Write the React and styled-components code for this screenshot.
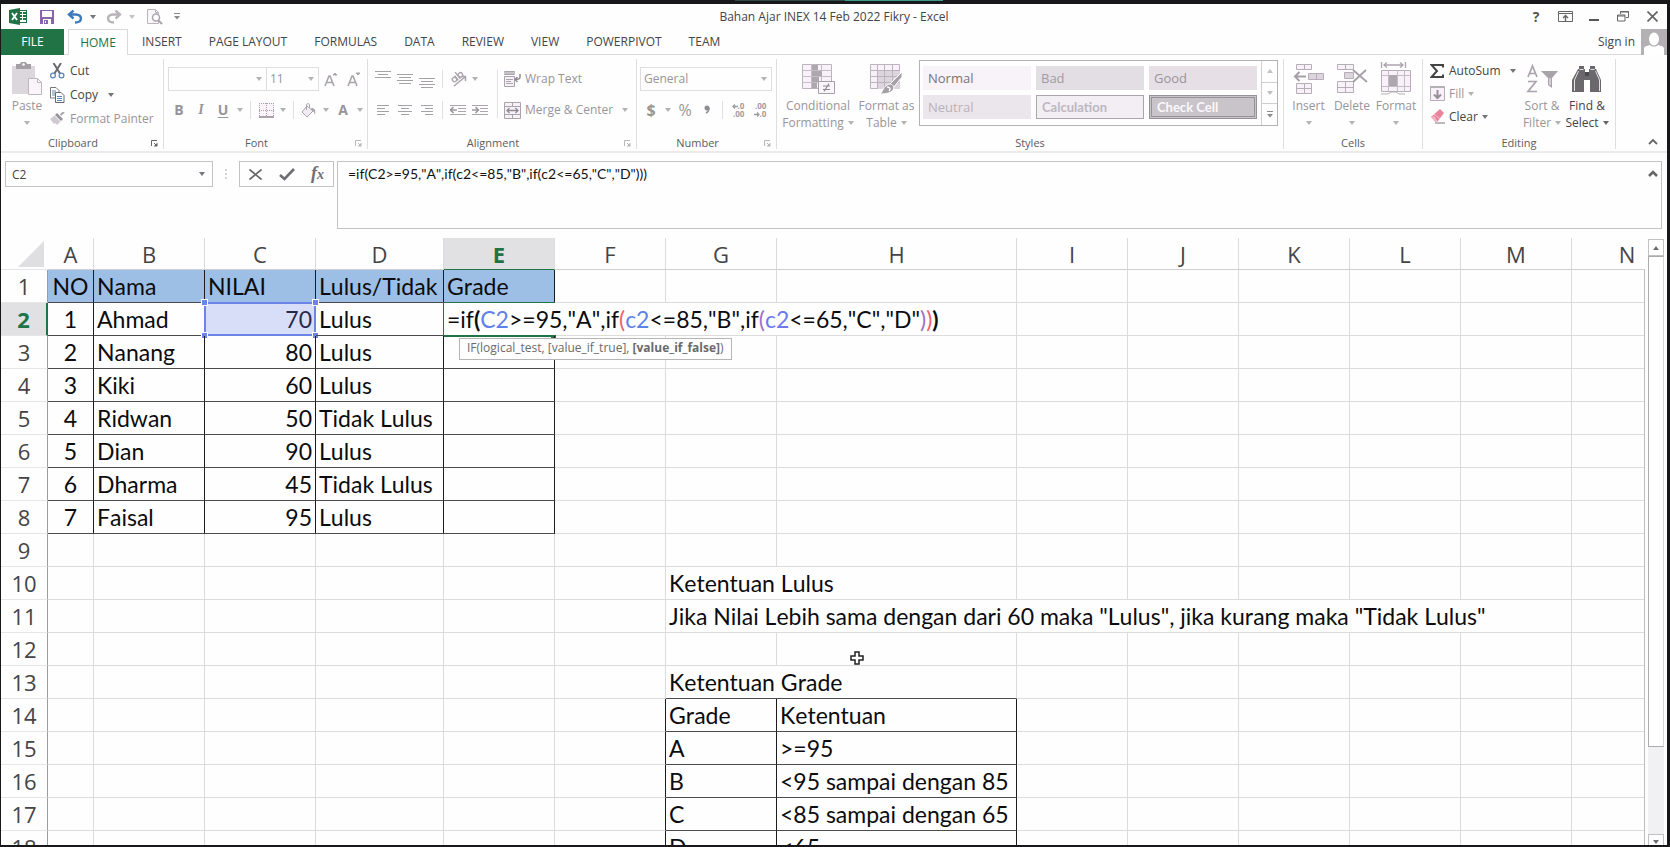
import React from "react";
import styled, { createGlobalStyle, css } from "styled-components";

const GlobalStyle = createGlobalStyle`
  *, *::before, *::after { box-sizing: border-box; }
  body { margin: 0; background: #18181a; font-kerning: none; }
  button, input, select, textarea { font: inherit; color: inherit; font-kerning: none; }
  button { padding: 0; border: 0; background: none; }
`;

const UI = `"Open Sans", "Noto Sans", sans-serif`;
const SHEET = `Lato, "Open Sans", sans-serif`;
const C = {
  text: "#444446",
  dim: "#98959a",
  line: "#d9d9db",
  green: "#217346",
};

/* ---------- window ---------- */

const Screen = styled.div`
  height: 100vh;
  padding: 4px 3px 2px 1px;
  background: #18181a;
  position: relative;
`;

const ShareStripe = styled.div`
  position: absolute;
  top: 0;
  left: 44%;
  width: 208px;
  height: 1px;
  background: linear-gradient(90deg, #2f4a47 53%, #3a9c8a 53%);
`;

const Window = styled.div`
  height: 100%;
  display: flex;
  flex-direction: column;
  overflow: hidden;
  background: #fefefe;
  color: ${C.text};
  font: 12px/16px ${UI};
  font-kerning: none;
`;

const TitleBar = styled.header`
  flex: none;
  display: grid;
  grid-template-columns: 1fr auto 1fr;
  align-items: center;
  height: 25px;
`;

const QuickAccess = styled.div`
  display: flex;
  align-items: center;
  padding-left: 8px;
  gap: 10px;
`;

const QuickButton = styled.button`
  display: flex;
  align-items: center;
  justify-content: center;
  gap: 7px;
  height: 20px;
  min-width: ${(p) => p.$w || 18}px;
`;

const Title = styled.h1`
  margin: 0;
  font-size: 12px;
  font-weight: 400;
`;

const WindowButtons = styled.div`
  display: flex;
  justify-content: flex-end;
  padding-right: 5px;
  gap: 9px;
`;

const WindowButton = styled.button`
  display: flex;
  align-items: center;
  justify-content: center;
  width: 20px;
  height: 20px;
  font-size: 14px;
  font-weight: 700;
  color: #555;
`;

/* ---------- tabs ---------- */

const TabBar = styled.nav`
  flex: none;
  display: flex;
  height: 26px;
  border-bottom: 1px solid ${C.line};
`;

const Tab = styled.button`
  height: 26px;
  padding: 0 13px;
  margin-right: 1px;
  ${(p) =>
    p.$kind === "file" &&
    css`
      width: 63px;
      margin-right: 4px;
      background: ${C.green};
      color: #fff;
    `}
  ${(p) =>
    p.$kind === "active" &&
    css`
      width: 60px;
      padding: 0;
      border: 1px solid ${C.line};
      border-bottom: 0;
      background: #fefefe;
      color: ${C.green};
    `}
`;

const Account = styled.div`
  margin-left: auto;
  display: flex;
  align-items: center;
  gap: 6px;
`;

/* ---------- ribbon ---------- */

const Ribbon = styled.section`
  flex: none;
  display: flex;
  height: 98px;
  padding-top: 4px;
  border-bottom: 2px solid #ebebed;
`;

const GroupBox = styled.section`
  flex: none;
  display: flex;
  flex-direction: column;
  width: ${(p) => p.$w}px;
  height: 90px;
  border-right: 1px solid #dedee0;
`;

const GroupBody = styled.div`
  flex: 1;
  display: flex;
  padding: 0 0 0 ${(p) => p.$left || 4}px;
`;

const GroupFoot = styled.footer`
  display: grid;
  grid-template-columns: ${(p) => (p.$launcher ? "1fr 18px" : "1fr")};
  align-items: center;
  justify-items: center;
  height: 13px;
`;

const Label = styled.h2`
  margin: 0;
  font-size: 11px;
  line-height: 14px;
  font-weight: 400;
  color: #5c5c5e;
`;

const Launcher = styled.button`
  display: flex;
  color: ${(p) => (p.$dim ? "#b9b6ba" : "#666")};
`;

const BigButton = styled.button`
  flex: none;
  display: flex;
  flex-direction: column;
  align-items: center;
  width: ${(p) => p.$w}px;
  height: 74px;
  padding-top: 2px;
  line-height: 17px;
  white-space: nowrap;
  color: ${(p) => (p.$on ? C.text : C.dim)};
`;

const BigIcon = styled.span`
  display: flex;
  align-items: center;
  height: 36px;
`;

const BigLine = styled.span`
  display: flex;
  align-items: center;
  gap: 4px;
  height: 17px;
`;

const Stack = styled.div`
  display: flex;
  flex-direction: column;
  width: ${(p) => (p.$w ? `${p.$w}px` : "auto")};
`;

const RowButton = styled.button`
  display: flex;
  align-items: center;
  gap: ${(p) => p.$gap || 4}px;
  height: ${(p) => p.$h || 24}px;
  white-space: nowrap;
  color: ${(p) => (p.$on ? C.text : C.dim)};
`;

const CaretSlot = styled.span`
  display: flex;
  margin-left: ${(p) => p.$gap || 0}px;
`;

const Rows = styled.div`
  display: flex;
  flex-direction: column;
  gap: 7px;
  padding-top: 8px;
`;

const Row = styled.div`
  display: flex;
  align-items: center;
  height: 24px;
`;

const Tool = styled.button`
  display: flex;
  align-items: center;
  justify-content: center;
  gap: 5px;
  width: ${(p) => p.$w || 22}px;
  height: 22px;
  color: ${C.dim};
  font-size: ${(p) => (p.$large ? 16 : 14)}px;
  font-weight: ${(p) => (p.$bold ? 700 : 400)};
  font-style: ${(p) => (p.$italic ? "italic" : "normal")};
  font-family: ${(p) => (p.$italic ? `"Liberation Serif", serif` : "inherit")};
  text-decoration: ${(p) => (p.$underline ? "underline" : "none")};
  text-underline-offset: 2px;
`;

const Rule = styled.span`
  width: 1px;
  height: 18px;
  margin: 0 4px;
  background: #e2e0e3;
`;

const TallRule = styled.span`
  width: 1px;
  height: 48px;
  margin: 11px 6px 0;
  background: #e2e0e3;
`;

const SelectBox = styled.label`
  position: relative;
  display: flex;
  align-items: center;
  width: ${(p) => p.$w}px;
  height: 24px;
  border: 1px solid #e0dde1;
  margin-right: ${(p) => (p.$joined ? -1 : 0)}px;
  select {
    appearance: none;
    width: 100%;
    height: 22px;
    padding: 0 3px;
    border: 0;
    background: none;
    color: ${C.dim};
  }
  svg {
    position: absolute;
    right: 4px;
  }
`;

const Gallery = styled.div`
  display: flex;
  width: 359px;
  height: 66px;
  margin: 1px 0 0 2px;
  border: 1px solid #b4b2b5;
`;

const Swatches = styled.div`
  flex: 1;
  display: grid;
  grid-template-columns: repeat(3, 108px);
  grid-auto-rows: 24px;
  gap: 5px;
  padding: 5px 0 0 3px;
`;

const Swatch = styled.button`
  padding: 0 5px;
  text-align: left;
  font-size: 13px;
  background: ${(p) => p.$bg};
  color: ${(p) => p.$fg};
  font-weight: ${(p) => (p.$bold ? 700 : 400)};
  font-family: ${(p) => (p.$bold ? SHEET : "inherit")};
  border: ${(p) => p.$border || "0"};
`;

const GallerySteps = styled.div`
  display: flex;
  flex-direction: column;
  width: 16px;
  border-left: 1px solid #d0cdd1;
  button {
    flex: 1;
    display: flex;
    align-items: center;
    justify-content: center;
    color: #aaa7ab;
  }
  button + button {
    border-top: 1px solid #d0cdd1;
  }
`;

const RibbonEnd = styled.div`
  flex: 1;
  display: flex;
  align-items: flex-end;
  justify-content: flex-end;
  padding: 0 9px 2px 0;
`;

/* ---------- formula bar ---------- */

const FormulaBar = styled.section`
  flex: none;
  display: flex;
  align-items: flex-start;
  height: 85px;
  padding: 8px 5px 0 4px;
`;

const NameBox = styled.label`
  display: flex;
  align-items: center;
  width: 208px;
  height: 26px;
  padding-right: 7px;
  border: 1px solid #c3c3c5;
  input {
    flex: 1;
    min-width: 0;
    height: 24px;
    padding: 0 6px;
    border: 0;
    outline: 0;
    background: none;
  }
`;

const Grip = styled.span`
  display: flex;
  align-items: center;
  justify-content: center;
  width: 26px;
  height: 26px;
`;

const EditButtons = styled.div`
  display: flex;
  align-items: center;
  justify-content: space-around;
  width: 95px;
  height: 26px;
  margin-right: 3px;
  border: 1px solid #c3c3c5;
  button {
    display: flex;
    align-items: center;
    justify-content: center;
    width: 26px;
  }
`;

const FormulaInput = styled.div`
  flex: 1;
  display: flex;
  height: 68px;
  border: 1px solid #c3c3c5;
  textarea {
    flex: 1;
    padding: 3px 0 0 10px;
    border: 0;
    outline: 0;
    resize: none;
    background: none;
    color: #111;
    font: 14px/18px ${SHEET};
    font-kerning: none;
  }
  button {
    height: 22px;
    padding-right: 3px;
  }
`;

/* ---------- worksheet ---------- */

const Sheet = styled.main`
  flex: 1;
  min-height: 0;
  display: flex;
`;

const GridClip = styled.div`
  flex: 1;
  min-width: 0;
  overflow: hidden;
  position: relative;
`;

const EdgeLine = styled.div`
  position: absolute;
  top: 32px;
  right: 0;
  bottom: 0;
  width: 1px;
  background: #bdbdbf;
`;

const Grid = styled.table`
  table-layout: fixed;
  width: 1682px;
  border-collapse: separate;
  border-spacing: 0;
  font: 23px/32px ${SHEET};
  font-kerning: none;
  color: #0c0c0e;
  th,
  td {
    padding: 0;
    white-space: nowrap;
  }
`;

const ColHead = styled.th`
  && {
    height: 32px;
    padding-top: 1px;
  }
  border-right: 1px solid #dcdcde;
  border-bottom: 1px solid ${(p) => (p.$active ? C.green : "#cfcfd1")};
  background: ${(p) => (p.$active ? "#e1e1e3" : "transparent")};
  color: ${(p) => (p.$active ? C.green : C.text)};
  font: ${(p) => (p.$active ? 700 : 400)} 22px/30px ${UI};
`;

const RowHead = styled.th`
  height: 33px;
  border-right: ${(p) => (p.$active ? `2px solid ${C.green}` : "1px solid #9c9c9e")};
  border-bottom: 1px solid #e6e6e8;
  background: ${(p) => (p.$active ? "#e1e1e3" : "transparent")};
  color: ${(p) => (p.$active ? C.green : C.text)};
  font: ${(p) => (p.$active ? 700 : 400)} 22px/32px ${UI};
`;

const Corner = styled.th`
  border-bottom: 1px solid #e6e6e8;
  svg {
    display: block;
    margin-left: 17px;
  }
`;

const Cell = styled.td`
  && {
    position: relative;
    height: 33px;
    padding: 0 3px;
    text-align: ${(p) => p.$align || "left"};
    background: ${(p) => (p.$head ? "#9dbfe6" : "transparent")};
    border-right: 1px solid ${(p) => (p.$boxR ? "#1c1c1e" : "#dcdcde")};
    border-bottom: 1px solid ${(p) => (p.$boxB ? "#4c4c4e" : "#dcdcde")};
  }
`;

const RefRange = styled.span`
  position: absolute;
  inset: -1px;
  border: 2px solid #6b84e6;
  background: rgba(107, 132, 230, 0.26);
`;

const Handle = styled.i`
  position: absolute;
  width: 5px;
  height: 5px;
  background: #6b84e6;
  outline: 1px solid #fff;
  ${(p) => (p.$bottom ? "bottom" : "top")}: -4px;
  ${(p) => (p.$right ? "right" : "left")}: -4px;
`;

const EditFrame = styled.span`
  position: absolute;
  top: -1px;
  left: -1px;
  width: 112px;
  height: 35px;
  border: 1px solid ${C.green};
  border-width: 1px 0 2px 1px;
  &::after {
    content: "";
    position: absolute;
    right: -1px;
    bottom: -3px;
    width: 5px;
    height: 3px;
    background: ${C.green};
  }
`;

const Part = styled.span`
  color: ${(p) => p.$c || "inherit"};
  font-weight: ${(p) => (p.$bold ? 700 : 400)};
`;

const ArgTip = styled.div`
  position: absolute;
  z-index: 2;
  top: 35px;
  left: 15px;
  height: 22px;
  padding: 0 7px;
  border: 1px solid #b5b5b7;
  background: #fefefe;
  color: #6a6a6c;
  font: 12px/18px ${UI};
  font-kerning: none;
`;

const CrossCursor = styled.svg`
  position: absolute;
  left: 73px;
  top: 18px;
`;

const ScrollBar = styled.div`
  flex: none;
  display: flex;
  flex-direction: column;
  width: 16px;
  margin: 1px 3px 0;
  background: #f1f1f3;
`;

const ScrollButton = styled.button`
  flex: none;
  display: flex;
  align-items: center;
  justify-content: center;
  height: ${(p) => (p.$cut ? 11 : 17)}px;
  border: 1px solid #c2c2c4;
  border-bottom: ${(p) => (p.$cut ? 0 : "1px solid #c2c2c4")};
  background: #fefefe;
  color: #6e6e70;
  overflow: hidden;
  padding-top: ${(p) => (p.$cut ? 4 : 0)}px;
`;

const Thumb = styled.div`
  flex: 491 0 0;
  border: 1px solid #aaaaac;
  border-right-color: #d6d6d8;
  background: #fefefe;
`;

const TrackRest = styled.div`
  flex: 87 0 0;
`;

/* ---------- icons ---------- */

const Caret = ({ c = "#77747a", up }) => (
  <svg width="6" height="4" viewBox="0 0 6 4" aria-hidden="true">
    <path d={up ? "M0 4h6L3 0z" : "M0 0h6L3 4z"} fill={c} />
  </svg>
);

const Ico = ({ w = 16, h = 16, children, ...rest }) => (
  <svg width={w} height={h} viewBox={`0 0 ${w} ${h}`} fill="none" aria-hidden="true" {...rest}>
    {children}
  </svg>
);

const G = "#aaa5ac";

const ExcelIcon = () => (
  <Ico w={18} h={17}>
    <rect x="8.500" y="2.500" width="9" height="12" fill="#fff" stroke={C.green} />
    <path d="M10 5h3M14 5h3M10 8h3M14 8h3M10 11h3M14 11h3" stroke={C.green} strokeWidth="2" />
    <path d="M0 2l11-2v17L0 15z" fill={C.green} />
    <path d="M3 5l5 7M8 5l-5 7" stroke="#fff" strokeWidth="1.800" />
  </Ico>
);
const SaveIcon = () => (
  <Ico w={14} h={14}>
    <path d="M0 0h14v14H0z" fill="#8a63ad" />
    <path d="M2 1h10v6H2z" fill="#fdfbff" />
    <path d="M3 9h8v5H3z" fill="#fff" />
    <path d="M4 10h4v4H4z" fill="#8a63ad" />
    <path d="M5 11h1v2H5z" fill="#fff" />
  </Ico>
);
const UndoIcon = ({ c = "#3b78bd", flip }) => (
  <Ico w={16} h={14}>
    <g transform={flip ? "matrix(-1 0 0 1 16 0)" : undefined} stroke={c} strokeWidth="2.400">
      <path d="M6.500 .5L2 4.500l4.500 4" />
      <path d="M2 4.500h7c6.500 0 7 8-1 8" />
    </g>
  </Ico>
);
const PreviewIcon = () => (
  <Ico w={17} h={17}>
    <path d="M1.500 1.500h8l3 3v11h-11z" stroke="#b9b5bb" fill="#faf7fb" />
    <path d="M9.500 1.500v3h3" stroke="#b9b5bb" />
    <circle cx="10" cy="9.500" r="3.500" fill="#fff" stroke={G} strokeWidth="1.500" />
    <path d="M12.500 12.500L16 16" stroke={G} strokeWidth="2" />
  </Ico>
);
const CustomizeIcon = () => (
  <Ico w={6} h={7}>
    <path d="M0 .5h6" stroke="#8c898e" />
    <path d="M0 3h6L3 6.500z" fill="#8c898e" />
  </Ico>
);
const RibbonOptIcon = () => (
  <Ico w={15} h={12}>
    <path d="M.5.5h14v10H.5zM.5 2.500h14" stroke="#666" />
    <path d="M7.500 10V5M5 7l2.500-2.500L10 7" stroke="#666" strokeWidth="1.400" />
  </Ico>
);
const MinIcon = () => (
  <Ico w={10} h={12}><path d="M0 9h10" stroke="#555" strokeWidth="2" /></Ico>
);
const RestoreIcon = () => (
  <Ico w={12} h={11}>
    <path d="M3.500 3V.5h8v6H9" stroke="#666" />
    <path d="M3 1h9" stroke="#666" />
    <path d="M.5 4h7.500v6H.5zM.5 5H8" stroke="#666" />
  </Ico>
);
const CloseIcon = ({ w = 11 }) => (
  <Ico w={w} h={11}><path d={`M.5.5l${w - 1} 10M${w - 0.5}.5l-${w - 1} 10`} stroke="#666" strokeWidth="1.700" /></Ico>
);
const Avatar = () => (
  <Ico w={26} h={26}>
    <path d="M0 0h26v26H0z" fill="#b3b1b4" />
    <ellipse cx="13" cy="10" rx="5" ry="6.500" fill="#fff" />
    <path d="M3 26v-6c0-3 3-3 6-4 2 2 6 2 8 0 3 1 6 1 6 4v6z" fill="#fff" />
  </Ico>
);
const LauncherIcon = () => (
  <Ico w={7} h={7}>
    <path d="M.5 6V.5H6M3 3l3 3" stroke="currentColor" />
    <path d="M6.500 2.500v4h-4z" fill="currentColor" />
  </Ico>
);
const PasteIcon = () => (
  <Ico w={32} h={34}>
    <path d="M1 4h23v28H1z" fill="#dcd6dd" />
    <path d="M5 2h4c0-3 7-3 7 0h4v5H5z" fill="#a39fa5" />
    <circle cx="12.500" cy="2.500" r="1.300" fill="#fff" />
    <path d="M17.500 16.500h9l4 4v12h-13z" fill="#fbf5fb" stroke="#bcb6bd" />
    <path d="M26.500 16.500v4h4" stroke="#bcb6bd" />
  </Ico>
);
const CutIcon = () => (
  <Ico w={15} h={16}>
    <path d="M3.500 0L10 10.500M11 0L4.500 10.500" stroke="#6a6a6e" strokeWidth="2" />
    <circle cx="3" cy="12.500" r="2.400" stroke="#5a85b8" strokeWidth="1.200" />
    <circle cx="11.500" cy="12.500" r="2.400" stroke="#5a85b8" strokeWidth="1.200" />
  </Ico>
);
const CopyIcon = () => (
  <Ico w={15} h={16}>
    <path d="M.5.5H6l3 3V11H.500z" fill="#fff" stroke="#77777b" />
    <path d="M2 4h4M2 6h3M2 8h3" stroke="#5a85b8" />
    <path d="M5.500 5.500H11l3 3v7H5.500z" fill="#fff" stroke="#66666a" />
    <path d="M7 9.500h5M7 11.500h5M7 13.500h5" stroke="#5a85b8" />
  </Ico>
);
const PainterIcon = () => (
  <Ico w={15} h={14}>
    <path d="M14 0l-3.500 3" stroke={G} strokeWidth="2" />
    <path d="M7 1l6 6-2 2-6-6z" fill="#989399" />
    <path d="M4.500 3.500l6 6L7 13 5 11l-1 1L0 7z" fill="#cfc9d0" />
  </Ico>
);
const GrowA = ({ down }) => (
  <Ico w={14} h={15}>
    <path d="M1 14L5 4h1l4 10M2.500 10.500h6" stroke={G} strokeWidth="1.600" />
    <path d={down ? "M9 1h4l-2 2z" : "M9 3h4l-2-2z"} fill={G} stroke={G} />
  </Ico>
);
const BordersIcon = () => (
  <Ico w={15} h={15}>
    <path d="M0 0h15v15H0z" fill="#faf3fa" />
    <path d="M0 .5h15M0 7.500h15M.5 0v14M7.500 0v14M14.500 0v14" stroke="#a9a2aa" strokeDasharray="1 1" />
    <path d="M0 14h15" stroke="#a9a2aa" strokeWidth="2" />
  </Ico>
);
const FillColorIcon = () => (
  <Ico w={16} h={15}>
    <path d="M6 3l6 5-6 6-5-5z" fill="#f2ebf3" stroke={G} />
    <path d="M5.500 7V1.500c0-1 3-1 3 0V5" stroke={G} />
    <path d="M10 5c4 0 5 2 4 7-1-3-1-4-3-4z" fill={G} />
  </Ico>
);

const Lines = ({ rows, w = 16, h = 18 }) => (
  <Ico w={w} h={h}>
    {rows.map(([x, y, l]) => (
      <path key={y} d={`M${x} ${y}.5h${l}`} stroke="#a5a2a7" />
    ))}
  </Ico>
);
const OrientIcon = () => (
  <Ico w={17} h={16}>
    <path d="M4 15L15 6M11 5.500h4.500V10" stroke={G} strokeWidth="1.500" />
    <g transform="rotate(-38 7 6)" stroke={G} strokeWidth="1.400">
      <circle cx="3.500" cy="6.500" r="2.200" />
      <path d="M6 3.500v6M8.500 1v8.500" />
      <circle cx="11" cy="6.500" r="2.200" />
    </g>
  </Ico>
);
const IndentIcon = ({ right }) => (
  <Ico w={16} h={11}>
    <path d="M0 .5h16M8 3.500h8M8 6.500h8M0 9.500h16" stroke="#aaa7ac" />
    <path d="M0 1.500h7v7H0z" fill="#fefefe" />
    <path d={right ? "M0 5h6M3.500 2L6.500 5l-3 3" : "M7 5H1M3.500 2L.5 5l3 3"} stroke="#9c989e" strokeWidth="1.600" />
  </Ico>
);
const WrapIcon = () => (
  <Ico w={17} h={16}>
    <path d="M.5.5h10v3H.500zM.5 5.500h10v10H.500z" fill="#f7f0f8" stroke="#aaa3ab" />
    <path d="M0 2h11" stroke="#c9c1ca" strokeWidth="2" />
    <path d="M2 8.500h7M2 10.500h5M2 12.500h7" stroke={G} />
    <path d="M16 3v3c0 2-1 2.500-5 2.500M13.500 6L11 8.500l2.500 2.500" stroke="#8f8a91" strokeWidth="1.500" />
  </Ico>
);
const MergeIcon = () => (
  <Ico w={17} h={17}>
    <path d="M.5.500h16v16H.500zM.5 4.500h16M.5 12.500h16M8.500 0v4M8.500 13v4" fill="#f7f0f8" stroke="#aaa3ab" />
    <path d="M3 8.500h11M5.500 6L3 8.500 5.500 11M11.500 6L14 8.500 11.500 11" stroke="#8f8a91" strokeWidth="1.300" />
  </Ico>
);
const CommaIcon = () => (
  <Ico w={8} h={10}><circle cx="4" cy="3" r="2.500" fill="#8f8c92" /><path d="M6 3c0 3-1 4-3 5" stroke="#8f8c92" strokeWidth="1.500" /></Ico>
);

const Digits = styled.span`
  display: flex;
  flex-direction: column;
  font: 700 8px/8px ${UI};
  color: #a09ca2;
  span {
    display: flex;
    align-items: center;
    justify-content: flex-end;
  }
`;
const Arrow = ({ right }) => (
  <Ico w={6} h={5}>
    <path d={right ? "M0 2.500h5M3 .5l2 2-2 2" : "M6 2.500H1M3 .5l-2 2 2 2"} stroke="#a09ca2" strokeWidth="1.300" />
  </Ico>
);

const CondIcon = () => (
  <Ico w={33} h={31}>
    <path d="M.5.500h29v24H.500z" fill="#f8f1f9" stroke="#bbb4bc" />
    <path d="M.5 6.500h29M.5 12.500h29M.5 18.500h29M9.500 0v24M19.500 0v24" stroke="#c4bdc5" />
    <path d="M10 1h6v5h-6zM10 7h10v5H10zM10 13h7v5h-7zM10 19h5v5h-5z" fill="#aea7af" />
    <path d="M16.500 17.500h16v12h-16z" fill="#fbf6fb" stroke="#a59fa6" />
    <path d="M21 22h7M21 25.500h7M27 19.500l-5 8" stroke="#8f8a91" strokeWidth="1.200" />
  </Ico>
);
const TableIcon = () => (
  <Ico w={33} h={31}>
    <path d="M.5.500h29v24H.500z" fill="#f8f1f9" stroke="#bbb4bc" />
    <path d="M8 7h22v18H8z" fill="#dcd5dd" />
    <path d="M.5 6.500h29M.5 12.500h29M.5 18.500h29M7.500 0v24M14.500 0v24M22.500 0v24" stroke="#bbb4bc" />
    <path d="M32 8v5L23 24l-4-3z" fill="#a59fa6" stroke="#fff" />
    <path d="M19 20c4 0 6 3 4 6-2 3-7 4-13 4 3-2 3-8 9-10z" fill="#a59fa6" stroke="#fff" />
    <path d="M17 23c3 0 4 2 2 4" stroke="#fff" strokeWidth="1.500" />
  </Ico>
);
const InsertIcon = () => (
  <Ico w={32} h={32}>
    <path d="M3.500 1.500h15v5h-15zM11.500 1v5M3.500 20.500h15v10h-15zM3.500 25.500h15M11.500 20v10" fill="#f8f1f9" stroke="#b5aeb6" />
    <path d="M15.500 10.500h15v6h-15zM23.500 10v6" fill="#dcd5dd" stroke="#b5aeb6" />
    <path d="M13 13.500H2M6.500 9L2 13.500 6.500 18" stroke="#a59fa6" strokeWidth="2" />
  </Ico>
);
const DeleteIcon = () => (
  <Ico w={32} h={32}>
    <path d="M1.500 1.500h16v5h-16zM9.500 1v5M1.500 18.500h16v11h-16zM1.500 24.500h16M9.500 18v11" fill="#f8f1f9" stroke="#b5aeb6" />
    <path d="M8.500 9.500h9v6h-9z" fill="#dcd5dd" stroke="#b5aeb6" />
    <path d="M17 7l14 12M30 7L17 19" stroke="#a59fa6" strokeWidth="1.800" />
  </Ico>
);
const FormatIcon = () => (
  <Ico w={32} h={34}>
    <path d="M1.500 0v6M25.500 0v6M4 3h19M7 .5L4 3l3 2.500M20 .5L23 3l-3 2.500" stroke={G} strokeWidth="1.300" />
    <path d="M1.500 8.500h29v21h-29z" fill="#f8f1f9" stroke="#b5aeb6" />
    <path d="M1.500 13.500h29M1.500 24.500h29M8.500 8v21M17.500 8v21M24.500 8v21" stroke="#c4bdc5" />
    <path d="M9 13h8v11H9z" fill="#aea7af" />
    <path d="M1 32h7l3-2h5l3 2h6" stroke="#b5aeb6" />
  </Ico>
);
const SumIcon = () => (
  <Ico w={15} h={14}>
    <path d="M13 3.500V1H1.500L7 7l-5.500 6H13v-2.500" stroke="#444" strokeWidth="2" />
  </Ico>
);
const FillDownIcon = () => (
  <Ico w={15} h={15}>
    <path d="M.5.500h14v14H.500z" fill="#f8f1f9" stroke="#b5aeb6" />
    <path d="M0 1.500h15" stroke="#b5aeb6" />
    <path d="M7.500 4v8M4 8.500L7.500 12 11 8.500" stroke="#958f96" strokeWidth="2" />
  </Ico>
);
const EraserIcon = () => (
  <Ico w={15} h={15}>
    <path d="M10 0l4 4-6 8H5L1 8z" fill="#e8849c" />
    <path d="M4 5l6 5" stroke="#f7c4d0" />
    <path d="M1 8l4 5h3L4 7z" fill="#f6b7c5" />
    <path d="M5 14h10" stroke="#777" />
  </Ico>
);
const SortIcon = () => (
  <Ico w={32} h={32}>
    <path d="M2 14L6.500 3 11 14M3.500 10.500h6" stroke={G} strokeWidth="1.700" />
    <path d="M2 18.500h8L2 28.500h9" stroke={G} strokeWidth="1.700" />
    <path d="M15 8h17l-6 7v10l-4-3v-7z" fill="#a8a2a9" />
    <path d="M24 15v7" stroke="#fff" />
  </Ico>
);
const FindIcon = () => (
  <Ico w={32} h={28}>
    <path d="M8 1h5v3h1v3h4V4h1V1h5v3h1l5 11v12H19V15h-6v12H1V15L7 4h1z" fill="#6a686c" />
    <path d="M14 7h4v4h-4z" fill="#4c4a4e" />
    <path d="M7.500 6L3.500 15v11M24.500 6l4 9v11M8.500 4.500h4M19.500 4.500h4" stroke="#fff" strokeWidth=".8" />
  </Ico>
);
const CheckIcon = () => (
  <Ico w={16} h={13}><path d="M1 7l4.500 4L15 1" stroke="#6e6e72" strokeWidth="2.600" /></Ico>
);
const Chevron = ({ bold }) => (
  <Ico w={10} h={7}><path d="M1 6l4-4 4 4" stroke="#666" strokeWidth={bold ? 2.6 : 1.8} /></Ico>
);

const Fx = styled.span`
  font: italic 700 18px/20px "Liberation Serif", serif;
  color: #6e6e72;
  small {
    font-size: 14px;
  }
`;

/* ---------- pieces ---------- */

const Group = ({ name, w, left, launcher, children }) => (
  <GroupBox $w={w} aria-label={name}>
    <GroupBody $left={left}>{children}</GroupBody>
    <GroupFoot $launcher={Boolean(launcher)}>
      <Label>{name}</Label>
      {launcher && (
        <Launcher $dim={launcher === "dim"} aria-label={`${name} settings`}>
          <LauncherIcon />
        </Launcher>
      )}
    </GroupFoot>
  </GroupBox>
);

const Big = ({ icon, lines, caret, on, w }) => (
  <BigButton $w={w} $on={on}>
    <BigIcon>{icon}</BigIcon>
    <BigLine>{lines[0]}</BigLine>
    <BigLine>
      {lines[1]}
      {caret && <Caret c={on ? "#666" : "#b5b1b6"} />}
    </BigLine>
  </BigButton>
);

const pale = "#b5b1b6";
const CaretTool = ({ label }) => (
  <Tool $w={12} aria-label={label}><Caret c={pale} /></Tool>
);

const swatches = [
  { t: "Normal", bg: "#f8f2f9", fg: "#77747a" },
  { t: "Bad", bg: "#e3dde4", fg: "#a19ca3" },
  { t: "Good", bg: "#e6e0e6", fg: "#98949a" },
  { t: "Neutral", bg: "#ebe5ec", fg: "#b9b3ba" },
  { t: "Calculation", bg: "#f3edf4", fg: "#bdb7be", bold: true, border: "1px solid #aaa6ab" },
  { t: "Check Cell", bg: "#c9c3ca", fg: "#fbf9fb", bold: true, border: "3px double #969297" },
];

const tabs = ["INSERT", "PAGE LAYOUT", "FORMULAS", "DATA", "REVIEW", "VIEW", "POWERPIVOT", "TEAM"];

const columns = [
  ["A", 46], ["B", 111], ["C", 111], ["D", 128], ["E", 111], ["F", 111], ["G", 111],
  ["H", 240], ["I", 111], ["J", 111], ["K", 111], ["L", 111], ["M", 111], ["N", 111],
];

const students = {
  2: ["1", "Ahmad", "70", "Lulus"],
  3: ["2", "Nanang", "80", "Lulus"],
  4: ["3", "Kiki", "60", "Lulus"],
  5: ["4", "Ridwan", "50", "Tidak Lulus"],
  6: ["5", "Dian", "90", "Lulus"],
  7: ["6", "Dharma", "45", "Tidak Lulus"],
  8: ["7", "Faisal", "95", "Lulus"],
};

const rules = {
  14: ["Grade", "Ketentuan"],
  15: ["A", ">=95"],
  16: ["B", "<95 sampai dengan 85"],
  17: ["C", "<85 sampai dengan 65"],
  18: ["D", "<65"],
};

const notes = {
  10: { text: "Ketentuan Lulus", span: 2 },
  11: { text: 'Jika Nilai Lebih sama dengan dari 60 maka "Lulus", jika kurang maka "Tidak Lulus"', span: 7 },
  13: { text: "Ketentuan Grade", span: 2 },
};

const formula = '=if(C2>=95,"A",if(c2<=85,"B",if(c2<=65,"C","D")))';
const BLUE = "#5f82ea";
const VIOLET = "#6f78ee";
const RED = "#f2606a";
const PURPLE = "#a070cc";

const EditedFormula = () => (
  <>
    =if<Part $bold>(</Part><Part $c={BLUE}>C2</Part>&gt;=95,"A",if<Part $c={RED}>(</Part>
    <Part $c={BLUE}>c2</Part>&lt;=85,"B",if<Part $c={PURPLE}>(</Part>
    <Part $c={VIOLET}>c2</Part>&lt;=65,"C","D"<Part $c={PURPLE}>)</Part>
    <Part $c={RED}>)</Part><Part $bold>)</Part>
  </>
);

function cellsFor(row) {
  const out = [];
  const headings = ["NO", "Nama", "NILAI", "Lulus/Tidak", "Grade"];
  for (let i = 0; i < columns.length; i += 1) {
    const key = columns[i][0];
    if (row === 1 && i < 5) {
      out.push(<Cell key={key} $head $boxR $boxB $align={i === 0 ? "center" : "left"}>{headings[i]}</Cell>);
    } else if (row === 2 && i === 4) {
      out.push(
        <Cell key={key} colSpan={4}>
          <EditFrame />
          <EditedFormula />
          <ArgTip role="tooltip">
            IF(logical_test, [value_if_true], <b>[value_if_false]</b>)
          </ArgTip>
        </Cell>
      );
      i += 3;
    } else if (students[row] && i < 5) {
      out.push(
        <Cell key={key} $boxR $boxB $align={i === 0 ? "center" : i === 2 ? "right" : "left"}>
          {students[row][i]}
          {row === 2 && i === 2 && (
            <RefRange>
              <Handle />
              <Handle $right />
              <Handle $bottom />
              <Handle $bottom $right />
            </RefRange>
          )}
        </Cell>
      );
    } else if (notes[row] && i === 6) {
      out.push(<Cell key={key} colSpan={notes[row].span} $boxB={row === 13}>{notes[row].text}</Cell>);
      i += notes[row].span - 1;
    } else if (rules[row] && (i === 6 || i === 7)) {
      out.push(<Cell key={key} $boxR $boxB>{rules[row][i - 6]}</Cell>);
    } else if (row === 12 && i === 7) {
      out.push(
        <Cell key={key}>
          <CrossCursor width="14" height="14" viewBox="0 0 14 14" aria-hidden="true">
            <path d="M5 1h4v4h4v4H9v4H5V9H1V5h4z" fill="#fff" stroke="#222" strokeWidth="1.500" />
          </CrossCursor>
        </Cell>
      );
    } else {
      out.push(<Cell key={key} $boxR={Boolean(rules[row]) && i === 5} />);
    }
  }
  return out;
}

export default function App() {
  return (
    <Screen>
      <GlobalStyle />
      <ShareStripe />
      <Window>
        <TitleBar>
          <QuickAccess>
            <ExcelIcon />
            <QuickButton $w={20} aria-label="Save"><SaveIcon /></QuickButton>
            <QuickButton aria-label="Undo"><UndoIcon /><Caret /></QuickButton>
            <QuickButton aria-label="Redo"><UndoIcon c="#b7b4b9" flip /><Caret c="#c5c2c6" /></QuickButton>
            <QuickButton aria-label="Print preview"><PreviewIcon /></QuickButton>
            <QuickButton $w={8} aria-label="Customize toolbar"><CustomizeIcon /></QuickButton>
          </QuickAccess>
          <Title>Bahan Ajar INEX 14 Feb 2022 Fikry - Excel</Title>
          <WindowButtons>
            <WindowButton aria-label="Help">?</WindowButton>
            <WindowButton aria-label="Ribbon display options"><RibbonOptIcon /></WindowButton>
            <WindowButton aria-label="Minimize"><MinIcon /></WindowButton>
            <WindowButton aria-label="Restore"><RestoreIcon /></WindowButton>
            <WindowButton aria-label="Close"><CloseIcon /></WindowButton>
          </WindowButtons>
        </TitleBar>

        <TabBar>
          <Tab $kind="file">FILE</Tab>
          <Tab $kind="active">HOME</Tab>
          {tabs.map((t) => (
            <Tab key={t}>{t}</Tab>
          ))}
          <Account>
            <button>Sign in</button>
            <Avatar />
          </Account>
        </TabBar>

        <Ribbon>
          <Group name="Clipboard" w={163} left={3} launcher="on">
            <Big w={46} icon={<PasteIcon />} lines={["Paste"]} caret />
            <Stack $w={110}>
              <RowButton $on $gap={5}><CutIcon />Cut</RowButton>
              <RowButton $on $gap={5}><CopyIcon />Copy<CaretSlot $gap={5}><Caret /></CaretSlot></RowButton>
              <RowButton $gap={5}><PainterIcon />Format Painter</RowButton>
            </Stack>
          </Group>

          <Group name="Font" w={204} left={4} launcher="dim">
            <Rows>
              <Row>
                <SelectBox $w={99} $joined>
                  <select aria-label="Font name" defaultValue=""><option value="" /></select>
                  <Caret c={pale} />
                </SelectBox>
                <SelectBox $w={53}>
                  <select aria-label="Font size"><option>11</option></select>
                  <Caret c={pale} />
                </SelectBox>
                <Tool $w={24} aria-label="Increase font size"><GrowA /></Tool>
                <Tool aria-label="Decrease font size"><GrowA down /></Tool>
              </Row>
              <Row>
                <Tool $bold>B</Tool>
                <Tool $bold $italic>I</Tool>
                <Tool $bold $underline>U</Tool>
                <CaretTool label="Underline styles" />
                <Rule />
                <Tool aria-label="Borders"><BordersIcon /></Tool>
                <CaretTool label="Border styles" />
                <Rule />
                <Tool aria-label="Fill color"><FillColorIcon /></Tool>
                <CaretTool label="Fill colors" />
                <Tool $bold aria-label="Font color">A</Tool>
                <CaretTool label="Font colors" />
              </Row>
            </Rows>
          </Group>

          <Group name="Alignment" w={269} launcher="dim">
            <Rows>
              <Row>
                <Tool aria-label="Top align"><Lines rows={[[0, 1, 16], [3, 4, 10], [0, 7, 16]]} /></Tool>
                <Tool aria-label="Middle align"><Lines rows={[[0, 4, 16], [2, 7, 12], [0, 10, 16], [2, 13, 12]]} /></Tool>
                <Tool aria-label="Bottom align"><Lines rows={[[0, 8, 16], [2, 11, 12], [0, 14, 16], [2, 17, 12]]} /></Tool>
                <Rule />
                <Tool $w={34} aria-label="Orientation"><OrientIcon /><Caret c={pale} /></Tool>
              </Row>
              <Row>
                <Tool aria-label="Align left"><Lines h={10} w={12} rows={[[0, 0, 12], [0, 3, 8], [0, 6, 12], [0, 9, 8]]} /></Tool>
                <Tool aria-label="Center"><Lines h={10} w={14} rows={[[0, 0, 14], [3, 3, 8], [0, 6, 14], [3, 9, 8]]} /></Tool>
                <Tool aria-label="Align right"><Lines h={10} w={12} rows={[[0, 0, 12], [4, 3, 8], [0, 6, 12], [4, 9, 8]]} /></Tool>
                <Rule />
                <Tool aria-label="Decrease indent"><IndentIcon /></Tool>
                <Tool aria-label="Increase indent"><IndentIcon right /></Tool>
              </Row>
            </Rows>
            <TallRule />
            <Rows>
              <RowButton><WrapIcon />Wrap Text</RowButton>
              <RowButton><MergeIcon />Merge &amp; Center<CaretSlot $gap={5}><Caret c={pale} /></CaretSlot></RowButton>
            </Rows>
          </Group>

          <Group name="Number" w={140} left={3} launcher="dim">
            <Rows>
              <Row>
                <SelectBox $w={132}>
                  <select aria-label="Number format"><option>General</option></select>
                  <Caret c={pale} />
                </SelectBox>
              </Row>
              <Row>
                <Tool $bold $large>$</Tool>
                <CaretTool label="Currency formats" />
                <Tool $large>%</Tool>
                <Tool aria-label="Comma style"><CommaIcon /></Tool>
                <Rule />
                <Tool aria-label="Increase decimal">
                  <Digits><span><Arrow />.0</span><span>.00</span></Digits>
                </Tool>
                <Tool aria-label="Decrease decimal">
                  <Digits><span>.00</span><span><Arrow right />.0</span></Digits>
                </Tool>
              </Row>
            </Rows>
          </Group>

          <Group name="Styles" w={507} left={3}>
            <Big w={76} icon={<CondIcon />} lines={["Conditional", "Formatting"]} caret />
            <Big w={61} icon={<TableIcon />} lines={["Format as", "Table"]} caret />
            <Gallery>
              <Swatches>
                {swatches.map((s) => (
                  <Swatch key={s.t} $bg={s.bg} $fg={s.fg} $bold={s.bold} $border={s.border}>
                    {s.t}
                  </Swatch>
                ))}
              </Swatches>
              <GallerySteps>
                <button aria-label="Previous styles"><Caret c="#c2bec3" up /></button>
                <button aria-label="Next styles"><Caret c="#c2bec3" /></button>
                <button aria-label="More styles"><CustomizeIcon /></button>
              </GallerySteps>
            </Gallery>
          </Group>

          <Group name="Cells" w={139} left={3}>
            <Big w={43} icon={<InsertIcon />} lines={["Insert"]} caret />
            <Big w={44} icon={<DeleteIcon />} lines={["Delete"]} caret />
            <Big w={44} icon={<FormatIcon />} lines={["Format"]} caret />
          </Group>

          <Group name="Editing" w={193} left={7}>
            <Stack $w={90}>
              <RowButton $on $h={23}><SumIcon />AutoSum<CaretSlot $gap={5}><Caret /></CaretSlot></RowButton>
              <RowButton $h={23}><FillDownIcon />Fill<Caret c={pale} /></RowButton>
              <RowButton $on $h={23}><EraserIcon />Clear<Caret /></RowButton>
            </Stack>
            <Big w={44} icon={<SortIcon />} lines={["Sort &", "Filter"]} caret />
            <Big w={46} on icon={<FindIcon />} lines={["Find &", "Select"]} caret />
          </Group>

          <RibbonEnd>
            <button aria-label="Collapse ribbon"><Chevron /></button>
          </RibbonEnd>
        </Ribbon>

        <FormulaBar>
          <NameBox>
            <input aria-label="Name box" defaultValue="C2" />
            <Caret />
          </NameBox>
          <Grip>
            <Ico w={2} h={10}>
              <path d="M1 0v2M1 4v2M1 8v2" stroke="#aaa" strokeWidth="1" />
            </Ico>
          </Grip>
          <EditButtons>
            <button aria-label="Cancel"><CloseIcon w={13} /></button>
            <button aria-label="Enter"><CheckIcon /></button>
            <button aria-label="Insert function"><Fx>f<small>x</small></Fx></button>
          </EditButtons>
          <FormulaInput>
            <textarea aria-label="Formula" defaultValue={formula} spellCheck={false} />
            <button aria-label="Collapse formula bar"><Chevron bold /></button>
          </FormulaInput>
        </FormulaBar>

        <Sheet>
          <GridClip>
            <Grid>
              <colgroup>
                <col width="47" />
                {columns.map(([name, w]) => (
                  <col key={name} width={w} />
                ))}
              </colgroup>
              <thead>
                <tr>
                  <Corner aria-label="Select all">
                    <Ico w={26} h={26}><path d="M26 0v26H0z" fill="#dfdfe1" /></Ico>
                  </Corner>
                  {columns.map(([name]) => (
                    <ColHead key={name} scope="col" $active={name === "E"}>{name}</ColHead>
                  ))}
                </tr>
              </thead>
              <tbody>
                {Array.from({ length: 18 }, (_, i) => i + 1).map((row) => (
                  <tr key={row}>
                    <RowHead scope="row" $active={row === 2}>{row}</RowHead>
                    {cellsFor(row)}
                  </tr>
                ))}
              </tbody>
            </Grid>
            <EdgeLine />
          </GridClip>
          <ScrollBar>
            <ScrollButton aria-label="Scroll up"><Caret c="#6e6e70" up /></ScrollButton>
            <Thumb />
            <TrackRest />
            <ScrollButton $cut aria-label="Scroll down"><Caret c="#6e6e70" /></ScrollButton>
          </ScrollBar>
        </Sheet>
      </Window>
    </Screen>
  );
}
